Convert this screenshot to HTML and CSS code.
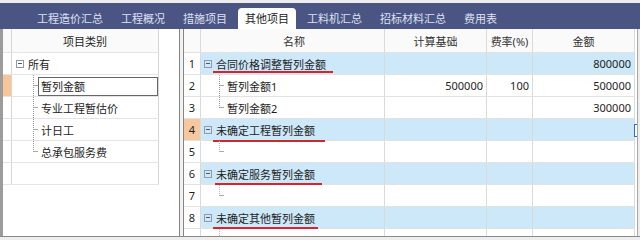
FILE: index.html
```html
<!DOCTYPE html>
<html lang="zh">
<head>
  <meta charset="UTF-8" />
  <title>其他项目</title>
  <link rel="stylesheet" href="styles.css">
</head>
<body>
  <div class="topline"></div>
  <div class="tabbar">
    <span class="tab">工程造价汇总</span>
    <span class="tab">工程概况</span>
    <span class="tab">措施项目</span>
    <span class="tab active">其他项目</span>
    <span class="tab">工料机汇总</span>
    <span class="tab">招标材料汇总</span>
    <span class="tab">费用表</span>
  </div>

  <div class="main">
    <div class="side">
      <div class="srow head"><div class="ind"></div><div class="scell center">项目类别</div></div>
      <div class="srow"><div class="ind"></div><div class="scell"><i class="fold"></i>所有</div></div>
      <div class="srow"><div class="ind cur"></div><div class="scell"><i class="branch"></i><span class="editbox">暂列金额</span></div></div>
      <div class="srow"><div class="ind"></div><div class="scell"><i class="branch"></i><span class="txt">专业工程暂估价</span></div></div>
      <div class="srow"><div class="ind"></div><div class="scell"><i class="branch"></i><span class="txt">计日工</span></div></div>
      <div class="srow"><div class="ind"></div><div class="scell"><i class="branch last"></i><span class="txt">总承包服务费</span></div></div>
      <div class="srow"><div class="ind"></div><div class="scell"></div></div>
    </div>

    <div class="split"></div>

    <div class="grid">
      <div class="grow head">
        <div class="c num"></div>
        <div class="c name center">名称</div>
        <div class="c base center">计算基础</div>
        <div class="c rate center">费率(%)</div>
        <div class="c amt center">金额</div>
      </div>
      <div class="grow group">
        <div class="c num">1</div>
        <div class="c name mark m1"><i class="fold"></i>合同价格调整暂列金额</div>
        <div class="c base"></div>
        <div class="c rate"></div>
        <div class="c amt">800000</div>
      </div>
      <div class="grow">
        <div class="c num">2</div>
        <div class="c name"><i class="branch"></i><span class="txt">暂列金额1</span></div>
        <div class="c base">500000</div>
        <div class="c rate">100</div>
        <div class="c amt">500000</div>
      </div>
      <div class="grow">
        <div class="c num">3</div>
        <div class="c name"><i class="branch last"></i><span class="txt">暂列金额2</span></div>
        <div class="c base"></div>
        <div class="c rate"></div>
        <div class="c amt">300000</div>
      </div>
      <div class="grow group">
        <div class="c num cur">4</div>
        <div class="c name mark m4"><i class="fold"></i>未确定工程暂列金额</div>
        <div class="c base"></div>
        <div class="c rate"></div>
        <div class="c amt"></div>
        <span class="caret"></span>
      </div>
      <div class="grow">
        <div class="c num">5</div>
        <div class="c name"><i class="branch stub"></i></div>
        <div class="c base"></div>
        <div class="c rate"></div>
        <div class="c amt"></div>
      </div>
      <div class="grow group">
        <div class="c num">6</div>
        <div class="c name mark m6"><i class="fold"></i>未确定服务暂列金额</div>
        <div class="c base"></div>
        <div class="c rate"></div>
        <div class="c amt"></div>
      </div>
      <div class="grow">
        <div class="c num">7</div>
        <div class="c name"><i class="branch stub"></i></div>
        <div class="c base"></div>
        <div class="c rate"></div>
        <div class="c amt"></div>
      </div>
      <div class="grow group">
        <div class="c num">8</div>
        <div class="c name mark m8"><i class="fold"></i>未确定其他暂列金额</div>
        <div class="c base"></div>
        <div class="c rate"></div>
        <div class="c amt"></div>
      </div>
      <div class="grow">
        <div class="c num">9</div>
        <div class="c name"><i class="branch stub"></i></div>
        <div class="c base"></div>
        <div class="c rate"></div>
        <div class="c amt"></div>
      </div>
    </div>
  </div>
</body>
</html>
```

FILE: styles.css
```css
* {
  box-sizing: border-box;
  font-family: "Noto Sans", "Noto Sans CJK SC", sans-serif;
}
body {
  margin: 0;
  width: 640px;
  height: 240px;
  overflow: hidden;
  background: #ededed;
  font-size: 11px;
  color: #1e1e1e;
}
.topline {
  height: 3px;
  background: #ececec;
}
.tabbar {
  height: 26px;
  background: #4b5584;
  display: flex;
  align-items: flex-end;
  gap: 4px;
  padding-left: 30px;
}
.tab {
  height: 21px;
  line-height: 21px;
  padding: 0 7px;
  color: #dde1f3;
  white-space: nowrap;
}
.tab.active {
  background: #fff;
  color: #222;
  border-radius: 4px 4px 0 0;
}
.main {
  display: flex;
  height: 208px;
  border-bottom: 1px solid #8a8a8a;
}

/* left tree */
.side {
  width: 180px;
  background: #fff;
  border-left: 3px solid #9c9c9c;
  border-right: 1px solid #858585;
}
.srow {
  display: flex;
  width: 156px;
  height: 22px;
  border-bottom: 1px solid #e4e4e4;
}
.srow.head {
  height: 24px;
  background: #fafafa;
}
.ind {
  width: 9px;
  border-right: 1px solid #d6d6d6;
}
.ind.cur {
  background: #f7c597;
}
.scell {
  width: 147px;
  display: flex;
  align-items: center;
  border-right: 1px solid #d6d6d6;
}
.center {
  justify-content: center;
}
.fold {
  width: 8px;
  height: 8px;
  margin: 0 4px 0 4px;
  border: 1px solid #8e9aac;
  background: linear-gradient(#556, #556) no-repeat center / 4px 1px;
}
.branch {
  align-self: stretch;
  width: 5px;
  margin-left: 21px;
  border-left: 1px dotted #9a9a9a;
  background: linear-gradient(#a8a8a8, #a8a8a8) no-repeat right center / 4px 1px;
}
.branch.last {
  align-self: flex-start;
  height: 11px;
  background-position: right bottom;
}
.txt {
  margin-left: 3px;
  white-space: nowrap;
}
.editbox {
  align-self: flex-end;
  flex: 1;
  height: 19px;
  line-height: 17px;
  padding-left: 2px;
  border: 1px solid #676767;
  white-space: nowrap;
}

.split {
  width: 3px;
  background: #f1f1f1;
}

/* right grid */
.grid {
  width: 455px;
  overflow: hidden;
  background: #fff;
  border-left: 1px solid #858585;
  border-right: 1px solid #a8a8a8;
}
.grow {
  position: relative;
  display: flex;
  width: 451px;
  height: 22px;
  border-bottom: 1px solid #e2e2e2;
}
.grow.head {
  height: 24px;
  background: #fafafa;
  color: #333;
}
.c {
  display: flex;
  align-items: center;
  justify-content: flex-end;
  padding-right: 3px;
  border-right: 1px solid #dadada;
  white-space: nowrap;
}
.c.center {
  justify-content: center;
  padding-right: 0;
}
.num {
  width: 17px;
  justify-content: center;
  padding-right: 0;
  background: #fff;
}
.head .num {
  background: #fafafa;
}
.num.cur {
  background: #f7c8a0;
}
.name {
  width: 184px;
  justify-content: flex-start;
  padding-left: 3px;
}
.name .fold {
  margin: 0 4px 0 0;
}
.name .branch {
  margin-left: 15px;
}
.name .branch.stub {
  align-self: flex-start;
  height: 11px;
  margin-top: 0;
  border-left-color: #b4b4b4;
  background-position: right bottom;
}
.base { width: 102px; }
.rate { width: 46px; }
.amt { width: 102px; }
.group .c:not(.num) {
  background: #cde8f9;
}

/* red marks under group names */
.mark {
  position: relative;
}
.mark::after {
  content: "";
  position: absolute;
  left: 12px;
  height: 2px;
  background: #d3252c;
}
.m1::after { top: 18px; width: 120px; }
.m4::after { top: 21px; width: 112px; }
.m6::after { top: 20px; left: 14px; width: 107px; }
.m8::after { top: 20px; width: 105px; }
.caret {
  position: absolute;
  right: -2px;
  top: 5px;
  width: 3px;
  height: 13px;
  border: 1px solid #1e73c4;
  border-right: none;
}
```
